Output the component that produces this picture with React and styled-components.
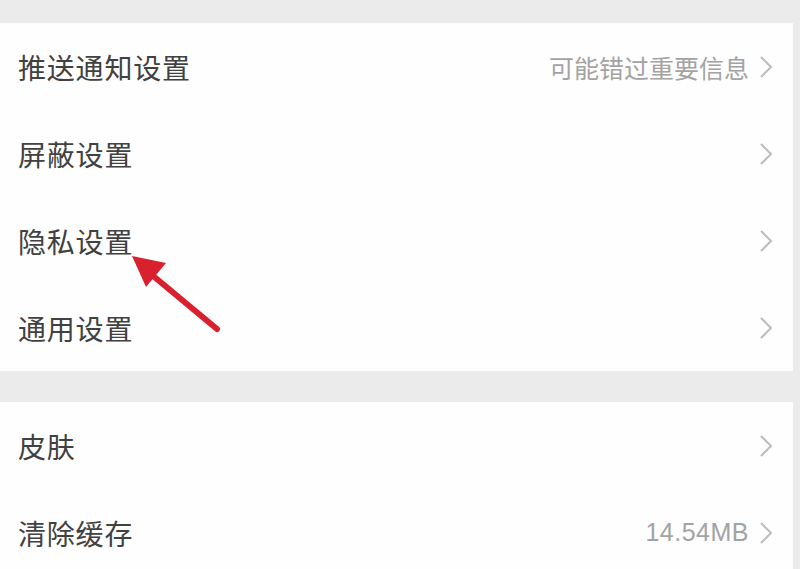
import React from "react";
import styled, { createGlobalStyle } from "styled-components";

const GlobalStyle = createGlobalStyle`
  html, body {
    margin: 0;
    padding: 0;
    background: #ebebeb;
  }
  body {
    font-family: "Noto Sans CJK SC", "Noto Sans", sans-serif;
  }
`;

const Page = styled.div`
  position: relative;
  width: 800px;
  height: 569px;
  overflow: hidden;
  background: #ebebeb;
  padding-top: 23px;
  box-sizing: border-box;
  display: flex;
  flex-direction: column;
  gap: 31px;
`;

const Section = styled.div`
  background: #fefefe;
  margin-right: 7px;
  display: flex;
  flex-direction: column;
`;

const Row = styled.div`
  height: 87px;
  display: flex;
  align-items: center;
  padding: 0 20px 0 18px;
  flex-shrink: 0;
`;

const Label = styled.div`
  flex: 1;
  font-size: 28px;
  color: #414141;
  letter-spacing: 0.8px;
`;

const Hint = styled.div`
  font-size: 25px;
  color: #a3a3a3;
  margin-right: 10px;
  letter-spacing: ${(p) => (p.$latin ? "0.5px" : "0")};
  font-family: ${(p) =>
    p.$latin ? '"Liberation Sans", "Noto Sans CJK SC", sans-serif' : 'inherit'};
`;

const Chevron = () => (
  <svg width="14" height="24" viewBox="0 0 14 24">
    <path d="M2 2 L12 12 L2 22" fill="none" stroke="#bcbcbc" strokeWidth="2" />
  </svg>
);

const Arrow = styled.svg`
  position: absolute;
  left: 0;
  top: 0;
  pointer-events: none;
`;

const SettingRow = ({ label, hint, latin }) => (
  <Row>
    <Label>{label}</Label>
    {hint && <Hint $latin={latin}>{hint}</Hint>}
    <Chevron />
  </Row>
);

export default function App() {
  return (
    <>
      <GlobalStyle />
      <Page>
        <Section>
          <SettingRow label="推送通知设置" hint="可能错过重要信息" />
          <SettingRow label="屏蔽设置" />
          <SettingRow label="隐私设置" />
          <SettingRow label="通用设置" />
        </Section>
        <Section>
          <SettingRow label="皮肤" />
          <SettingRow label="清除缓存" hint="14.54MB" latin />
        </Section>
        <Arrow width="800" height="569">
          <line
            x1="217"
            y1="329"
            x2="152"
            y2="275"
            stroke="#d8202e"
            strokeWidth="6"
            strokeLinecap="round"
          />
          <polygon points="132,256 166,263 146,287" fill="#d8202e" />
        </Arrow>
      </Page>
    </>
  );
}
